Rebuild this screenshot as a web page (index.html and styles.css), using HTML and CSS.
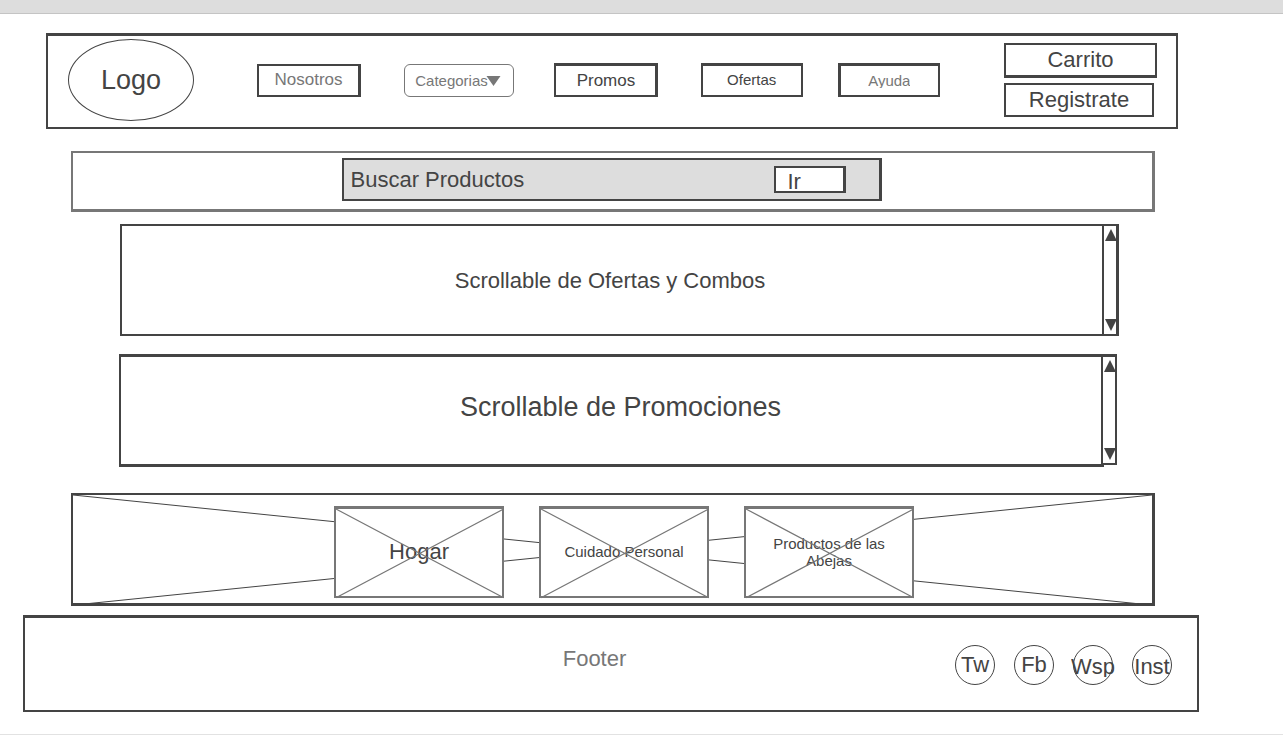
FILE: index.html
```html
<!DOCTYPE html>
<html lang="es">
<head>
<meta charset="utf-8">
<meta name="viewport" content="width=device-width, initial-scale=1">
<title>Tienda</title>
<link rel="stylesheet" href="styles.css">
</head>
<body>
<div class="topbar"></div>
<div class="page">
  <header class="header">
    <a class="logo" href="#">Logo</a>
    <nav class="nav">
      <button class="btn btn-nosotros" type="button">Nosotros</button>
      <div class="dropdown">
        <select class="dropdown-select" aria-label="Categorias">
          <option>Categorias</option>
        </select>
        <svg class="dropdown-caret" viewBox="0 0 14 10" aria-hidden="true"><path d="M0 0H14L7 10Z"/></svg>
      </div>
      <button class="btn btn-promos" type="button">Promos</button>
      <button class="btn btn-ofertas" type="button">Ofertas</button>
      <button class="btn btn-ayuda" type="button"><span class="btn-text">Ayuda</span></button>
    </nav>
    <div class="account">
      <button class="btn btn-cart" type="button">Carrito</button>
      <button class="btn btn-register" type="button">Registrate</button>
    </div>
  </header>

  <main class="main">
    <section class="search">
      <form class="search-form">
        <input class="search-input" type="text" placeholder="Buscar Productos" aria-label="Buscar Productos">
        <button class="search-go" type="button">Ir</button>
      </form>
    </section>

    <section class="panel panel-offers">
      <div class="panel-content"><h2 class="panel-title">Scrollable de Ofertas y Combos</h2></div>
      <div class="scroller">
        <button class="scroller-btn" type="button" aria-label="Subir"><svg viewBox="0 0 12 12"><path d="M6 0L12 12H0Z"/></svg></button>
        <button class="scroller-btn" type="button" aria-label="Bajar"><svg viewBox="0 0 12 12"><path d="M0 0H12L6 12Z"/></svg></button>
      </div>
    </section>

    <section class="panel panel-promos">
      <div class="panel-content"><h2 class="panel-title">Scrollable de Promociones</h2></div>
      <div class="scroller">
        <button class="scroller-btn" type="button" aria-label="Subir"><svg viewBox="0 0 12 12"><path d="M6 0L12 12H0Z"/></svg></button>
        <button class="scroller-btn" type="button" aria-label="Bajar"><svg viewBox="0 0 12 12"><path d="M0 0H12L6 12Z"/></svg></button>
      </div>
    </section>

    <section class="gallery">
      <svg class="cross" viewBox="0 0 100 100" preserveAspectRatio="none" aria-hidden="true"><path d="M0 0L100 102M100 0L0 102"/></svg>
      <a class="card card-large" href="#">Hogar
        <svg class="cross" viewBox="0 0 100 100" preserveAspectRatio="none" aria-hidden="true"><path d="M0 0L101 102M101 0L0 102"/></svg>
      </a>
      <a class="card" href="#">Cuidado Personal
        <svg class="cross" viewBox="0 0 100 100" preserveAspectRatio="none" aria-hidden="true"><path d="M0 0L101 102M101 0L0 102"/></svg>
      </a>
      <a class="card" href="#">Productos de las Abejas
        <svg class="cross" viewBox="0 0 100 100" preserveAspectRatio="none" aria-hidden="true"><path d="M0 0L101 102M101 0L0 102"/></svg>
      </a>
    </section>
  </main>

  <footer class="footer">
    <p class="footer-title">Footer</p>
    <div class="social">
      <a class="social-link" href="#"><span class="social-text">Tw</span></a>
      <a class="social-link" href="#"><span class="social-text">Fb</span></a>
      <a class="social-link social-low" href="#"><span class="social-text social-text-cut">Wsp</span></a>
      <a class="social-link social-low" href="#"><span class="social-text">Inst</span></a>
    </div>
  </footer>
</div>
<div class="endline"></div>
</body>
</html>
```
FILE: styles.css
```css
:root {
  --ink: #444;
  --muted: #777;
  --fill: #ddd;
}

* { box-sizing: border-box; }

body {
  margin: 0;
  background: #fff;
  color: var(--ink);
  font-family: "Liberation Sans", Arial, sans-serif;
  font-size: 22px;
}

button, input, select { font: inherit; color: inherit; }
a { color: inherit; text-decoration: none; }
svg { display: block; fill: currentColor; }

.topbar {
  height: 14px;
  background: var(--fill);
  border-bottom: 1px solid #c4c4c4;
}

.page { padding: 19px 84px 22px 23px; }

/* Header */
.header {
  display: flex;
  align-items: center;
  min-height: 96px;
  margin: 0 21px 0 23px;
  padding: 0 19px 3px 20px;
  border: 2px solid var(--ink);
  border-top-width: 3px;
}

.logo {
  display: flex;
  align-items: center;
  justify-content: center;
  flex: none;
  width: 126px;
  height: 82px;
  border: 1px solid var(--ink);
  border-radius: 50%;
  font-size: 27px;
}

.nav {
  display: grid;
  grid-template-columns: 147fr 150fr 146fr 137fr 102fr;
  align-items: center;
  flex: 1;
  margin: 0 64px 0 63px;
}

.btn {
  display: flex;
  align-items: center;
  justify-content: center;
  width: 102px;
  height: 34px;
  padding: 0;
  background: #fff;
  border: 2px solid var(--ink);
}

.btn-nosotros {
  width: 104px;
  height: 33px;
  border-right-width: 3px;
  color: var(--muted);
  font-size: 17px;
}

.btn-promos {
  width: 104px;
  border-width: 3px 3px 2px 2px;
  font-size: 17px;
}

.btn-ofertas {
  border-top-width: 3px;
  padding-bottom: 2px;
  font-size: 15px;
}

.btn-ayuda {
  border-width: 3px 2px 2px 3px;
  color: var(--muted);
  font-size: 15px;
}

.btn-text {
  line-height: 14px;
  overflow: hidden;
}

.dropdown {
  position: relative;
  width: 110px;
  color: var(--muted);
}

.dropdown-select {
  display: block;
  appearance: none;
  width: 100%;
  height: 33px;
  padding: 0 10px;
  background: #fff;
  border: 1px solid var(--muted);
  border-radius: 6px;
  font-size: 15px;
}

.dropdown-caret {
  position: absolute;
  top: 12px;
  right: 13px;
  width: 15px;
  height: 10px;
  pointer-events: none;
}

.account {
  display: grid;
  gap: 5px;
  flex: none;
}

.btn-cart {
  width: 153px;
  height: 35px;
  border-bottom-width: 3px;
}

.btn-register { width: 150px; }

/* Search */
.search {
  display: flex;
  justify-content: center;
  margin: 22px 44px 0 48px;
  padding: 5px 2px 8px 0;
  border: 2px solid var(--muted);
  border-width: 2px 3px 3px 2px;
}

.search-form {
  display: flex;
  align-items: center;
  width: 540px;
  height: 43px;
  padding-right: 33px;
  background: var(--fill);
  border: 2px solid var(--ink);
  border-right-width: 3px;
}

.search-input {
  flex: 1;
  min-width: 0;
  height: 100%;
  padding: 0 7px;
  background: transparent;
  border: 0;
}

.search-input::placeholder { color: var(--ink); opacity: 1; }

.search-go {
  width: 72px;
  height: 27px;
  padding: 2px 0 0 12px;
  background: #fff;
  border: 2px solid var(--ink);
  border-right-width: 3px;
  line-height: 24px;
  text-align: left;
}

/* Scrollable panels */
.panel {
  display: flex;
  align-items: stretch;
}

.panel-offers {
  height: 112px;
  margin: 12px 80px 0 97px;
}

.panel-promos {
  height: 113px;
  margin: 18px 82px 0 96px;
}

.panel-content {
  display: flex;
  align-items: center;
  justify-content: center;
  flex: 1;
  padding: 2px 4px 0 0;
  border: 2px solid var(--ink);
  border-right: 0;
}

.panel-promos .panel-content {
  margin-right: -3px;
  padding: 0 0 6px 16px;
  border-top-width: 3px;
  border-bottom-width: 3px;
}

.panel-title {
  margin: 0;
  font-size: 22px;
  font-weight: 400;
}

.panel-promos .panel-title { font-size: 27px; }

.scroller {
  display: flex;
  flex-direction: column;
  justify-content: space-between;
  width: 17px;
  padding: 3px 0 3px 1px;
  background: #fff;
  border: 2px solid var(--ink);
  border-right-width: 3px;
}

.panel-promos .scroller {
  width: 16px;
  margin-bottom: 2px;
  border-width: 3px 2px 2px 2px;
}

.scroller-btn {
  width: 12px;
  height: 12px;
  padding: 0;
  background: none;
  border: 0;
}

/* Categories */
.gallery {
  position: relative;
  display: flex;
  justify-content: center;
  gap: 35px;
  height: 113px;
  margin: 26px 44px 0 48px;
  padding: 11px 0 0 23px;
  border: 2px solid var(--ink);
  border-width: 2px 3px 3px 2px;
}

.cross {
  position: absolute;
  inset: 0;
  width: 100%;
  height: 100%;
  overflow: visible;
  fill: none;
  stroke: currentColor;
  stroke-width: 1px;
  pointer-events: none;
}

.cross path { vector-effect: non-scaling-stroke; }

.card {
  position: relative;
  display: flex;
  align-items: center;
  justify-content: center;
  width: 170px;
  height: 92px;
  padding: 0 18px 2px;
  background: #fff;
  border: 2px solid var(--muted);
  border-top-width: 3px;
  font-size: 15px;
  line-height: 17px;
  text-align: center;
}

.card-large { font-size: 22px; }

.card .cross {
  color: var(--muted);
  stroke-width: 1.3px;
}

/* Footer */
.footer {
  display: grid;
  grid-template-columns: 1fr auto 1fr;
  align-items: center;
  min-height: 97px;
  margin-top: 9px;
  padding-right: 25px;
  border: 2px solid var(--ink);
  border-top-width: 3px;
}

.footer-title {
  grid-column: 2;
  margin: 0;
  padding: 0 8px 10px 0;
  color: var(--muted);
}

.social {
  display: flex;
  gap: 19px;
  justify-self: end;
  padding-top: 2px;
}

.social-link {
  display: flex;
  align-items: center;
  justify-content: center;
  width: 40px;
  height: 40px;
  border: 1px solid var(--ink);
  border-radius: 50%;
}

.social-text { flex: none; }

.social-text-cut {
  line-height: 20px;
  overflow: hidden;
}

.social-low { padding-top: 3px; }

.endline { border-top: 1px solid #e2e2e2; }
```
